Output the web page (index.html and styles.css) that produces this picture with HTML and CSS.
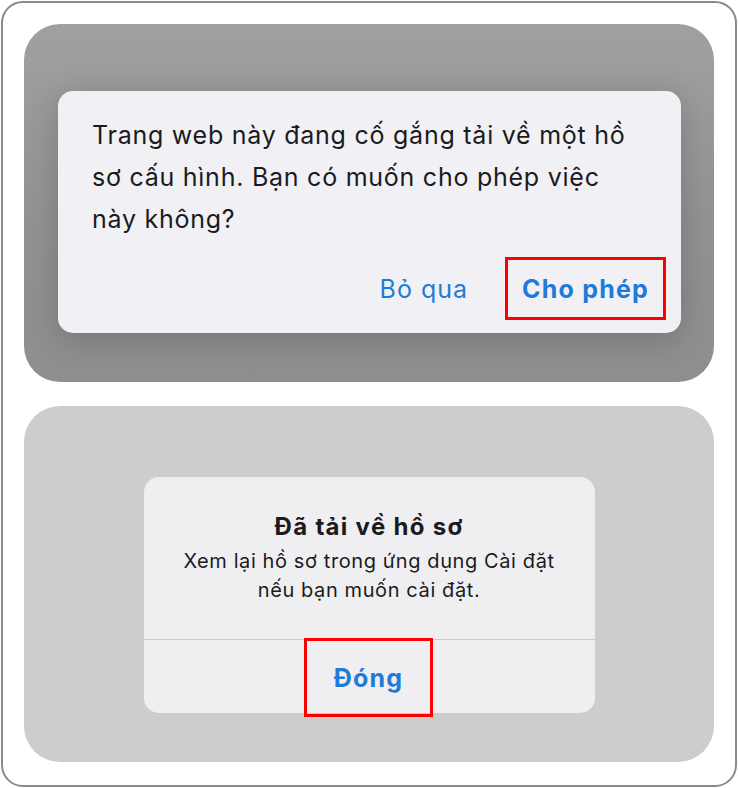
FILE: index.html
```html
<!DOCTYPE html>
<html lang="vi">
<head>
<meta charset="utf-8">
<title>Tải về hồ sơ cấu hình</title>
<link rel="stylesheet" href="styles.css">
</head>
<body>
<div class="frame">
  <section class="panel panel-dark">
    <div class="alert alert-wide">
      <p class="alert-message">Trang web này đang cố gắng tải về một hồ sơ cấu hình. Bạn có muốn cho phép việc này không?</p>
      <div class="alert-actions">
        <button class="action">Bỏ qua</button>
        <button class="action action-primary marked">Cho phép</button>
      </div>
    </div>
  </section>
  <section class="panel panel-light">
    <div class="alert alert-compact">
      <div class="alert-body">
        <h2 class="alert-title">Đã tải về hồ sơ</h2>
        <p class="alert-note">Xem lại hồ sơ trong ứng dụng Cài đặt nếu bạn muốn cài đặt.</p>
      </div>
      <div class="alert-footer">
        <button class="action action-primary marked close">Đóng</button>
      </div>
    </div>
  </section>
</div>
</body>
</html>
```

FILE: styles.css
```css
html, body {
  margin: 0;
  padding: 0;
  background: #ffffff;
}

body {
  font-family: Inter, "Noto Sans", "DejaVu Sans", sans-serif;
  color: #1b1b1d;
}

.frame {
  box-sizing: border-box;
  width: 736px;
  height: 786px;
  margin: 1px;
  border: 2px solid #8a8a8a;
  border-radius: 22px;
  padding: 21px 21px 0 21px;
  display: flex;
  flex-direction: column;
  gap: 24px;
  background: #ffffff;
}

.panel {
  border-radius: 36px;
  display: flex;
  justify-content: center;
  align-items: flex-start;
  box-sizing: border-box;
}

.panel-dark {
  height: 358px;
  background: linear-gradient(180deg, #a0a0a0 0%, #939393 55%, #8e8e8e 100%);
  padding-top: 67px;
}

.panel-light {
  height: 356px;
  background: #cdcdcd;
  padding-top: 71px;
}

.alert {
  background: #f1f0f5;
  border-radius: 15px;
  box-sizing: border-box;
}

/* first alert: left aligned message with inline actions */
.alert-wide {
  width: 623px;
  height: 242px;
  margin-left: 1px;
  padding: 23px 15px 13px 34px;
  display: flex;
  flex-direction: column;
  box-shadow: 0 6px 34px rgba(0, 0, 0, 0.2);
}

.alert-message {
  margin: 0;
  font-size: 25px;
  line-height: 42px;
  letter-spacing: 0.75px;
  padding-right: 20px;
}

.alert-actions {
  margin-top: auto;
  display: flex;
  justify-content: flex-end;
  gap: 20px;
}

.action {
  font-family: inherit;
  background: transparent;
  border: 3px solid transparent;
  color: #1f7ad8;
  font-size: 25px;
  letter-spacing: 1px;
  padding: 0 14px;
  height: 63px;
  cursor: pointer;
}

.action-primary {
  font-weight: 700;
  letter-spacing: 1.2px;
}

.marked {
  border-color: #fe0000;
}

/* second alert: centered title, note and a full width footer */
.alert-compact {
  width: 451px;
  height: 236px;
  background: #efeff1;
  display: flex;
  flex-direction: column;
}

.alert-body {
  text-align: center;
  padding-top: 33px;
  height: 163px;
  flex-shrink: 0;
  box-sizing: border-box;
  border-bottom: 1px solid #c9c9cc;
}

.alert-title {
  margin: 0;
  font-size: 24px;
  font-weight: 700;
  letter-spacing: 1.3px;
  line-height: 34px;
}

.alert-note {
  margin: 3px 0 0;
  font-size: 20px;
  letter-spacing: 0.6px;
  line-height: 29px;
  padding: 0 30px;
}

.alert-footer {
  display: flex;
  justify-content: center;
  flex-shrink: 0;
}

.close {
  margin-top: -2px;
  width: 129px;
  height: 79px;
  font-size: 25px;
  padding: 0;
  margin-right: 1px;
}
```
